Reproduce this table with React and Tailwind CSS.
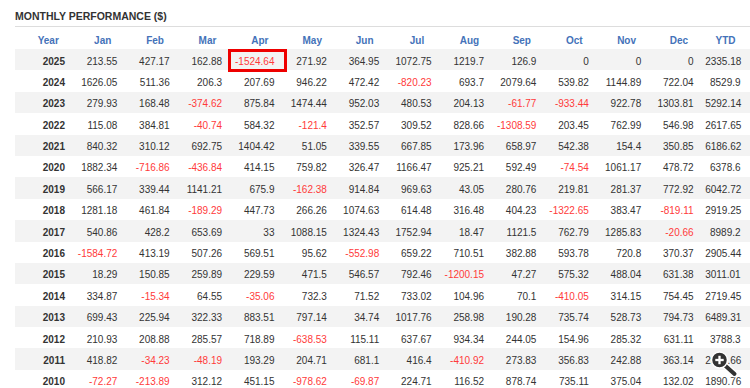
import React from "react";

const rows = [
  ["2025", "213.55", "427.17", "162.88", "-1524.64", "271.92", "364.95", "1072.75", "1219.7", "126.9", "0", "0", "0", "2335.18"],
  ["2024", "1626.05", "511.36", "206.3", "207.69", "946.22", "472.42", "-820.23", "693.7", "2079.64", "539.82", "1144.89", "722.04", "8529.9"],
  ["2023", "279.93", "168.48", "-374.62", "875.84", "1474.44", "952.03", "480.53", "204.13", "-61.77", "-933.44", "922.78", "1303.81", "5292.14"],
  ["2022", "115.08", "384.81", "-40.74", "584.32", "-121.4", "352.57", "309.52", "828.66", "-1308.59", "203.45", "762.99", "546.98", "2617.65"],
  ["2021", "840.32", "310.12", "692.75", "1404.42", "51.05", "339.55", "667.85", "173.96", "658.97", "542.38", "154.4", "350.85", "6186.62"],
  ["2020", "1882.34", "-716.86", "-436.84", "414.15", "759.82", "326.47", "1166.47", "925.21", "592.49", "-74.54", "1061.17", "478.72", "6378.6"],
  ["2019", "566.17", "339.44", "1141.21", "675.9", "-162.38", "914.84", "969.63", "43.05", "280.76", "219.81", "281.37", "772.92", "6042.72"],
  ["2018", "1281.18", "461.84", "-189.29", "447.73", "266.26", "1074.63", "614.48", "316.48", "404.23", "-1322.65", "383.47", "-819.11", "2919.25"],
  ["2017", "540.86", "428.2", "653.69", "33", "1088.15", "1324.43", "1752.94", "18.47", "1121.5", "762.79", "1285.83", "-20.66", "8989.2"],
  ["2016", "-1584.72", "413.19", "507.26", "569.51", "95.62", "-552.98", "659.22", "710.51", "382.88", "593.78", "720.8", "370.37", "2905.44"],
  ["2015", "18.29", "150.85", "259.89", "229.59", "471.5", "546.57", "792.46", "-1200.15", "47.27", "575.32", "488.04", "631.38", "3011.01"],
  ["2014", "334.87", "-15.34", "64.55", "-35.06", "732.3", "71.52", "733.02", "104.96", "70.1", "-410.05", "314.15", "754.45", "2719.45"],
  ["2013", "699.43", "225.94", "322.33", "883.51", "797.14", "34.74", "1017.76", "258.98", "190.28", "735.74", "528.73", "794.73", "6489.31"],
  ["2012", "210.93", "208.88", "285.57", "718.89", "-638.53", "115.11", "637.67", "934.34", "244.05", "154.96", "285.32", "631.11", "3788.3"],
  ["2011", "418.82", "-34.23", "-48.19", "193.29", "204.71", "681.1", "416.4", "-410.92", "273.83", "356.83", "242.88", "363.14", "2657.66"],
  ["2010", "-72.27", "-213.89", "312.12", "451.15", "-978.62", "-69.87", "224.71", "116.52", "878.74", "735.11", "375.04", "132.02", "1890.76"],
];

const months = ["Jan", "Feb", "Mar", "Apr", "May", "Jun", "Jul", "Aug", "Sep", "Oct", "Nov", "Dec"];

const gridCls = "grid grid-cols-[61.5px_repeat(12,52.4px)_44.7px]";

function Cell({ v, ci, ri }) {
  const neg = v.startsWith("-");
  const color = neg ? "text-[#ff3a3a]" : "text-[#333333]";
  if (ci === 0) {
    return <div className="text-right pr-[11.5px] pt-[6.5px] leading-[12px] font-bold text-[#333333]">{v}</div>;
  }
  if (ci === 13) {
    return <div className={"text-right pr-[9.3px] pt-[6.5px] leading-[12px] " + color}>{v}</div>;
  }
  const boxed = ri === 0 && ci === 4;
  return (
    <div className={"relative text-right pr-[11.6px] pt-[6.5px] leading-[12px] " + color}>
      {v}
      {boxed && (
        <span className="absolute z-10 -left-[6px] -right-[1px] top-0 -bottom-[2px] border-[3px] border-[#ee0000]" />
      )}
    </div>
  );
}

export default function App() {
  return (
    <div className="relative w-[750px] h-[388px] overflow-hidden bg-white font-['Liberation_Sans',Arial,sans-serif] text-[10px]">
      <div className="ml-[15px] pt-[10px] pb-[3px] border-b border-[#dddddd]">
        <div className="text-[10.5px] leading-[13px] font-bold text-[#333333]">MONTHLY PERFORMANCE ($)</div>
      </div>
      <div className="ml-[15px]">
        <div className={gridCls + " h-[22px]"}>
          <div className="text-center pl-[5px] pt-[8px] leading-[12px] font-bold text-[#4472b9]">Year</div>
          {months.map((m) => (
            <div key={m} className="text-center pt-[8px] leading-[12px] font-bold text-[#4472b9]">{m}</div>
          ))}
          <div className="text-center pr-[4px] pt-[8px] leading-[12px] font-bold text-[#4472b9]">YTD</div>
        </div>
        {rows.map((r, ri) => (
          <div key={r[0]} className={gridCls + " h-[21.4px] " + (ri % 2 === 0 ? "bg-[#f3f3f3]" : "bg-white")}>
            {r.map((v, ci) => (
              <Cell key={ci} v={v} ci={ci} ri={ri} />
            ))}
          </div>
        ))}
      </div>
      <svg className="absolute left-[709px] top-[349px] z-20" width="30" height="30" viewBox="0 0 30 30">
        <line x1="15.5" y1="16" x2="25.5" y2="25" stroke="#ffffff" strokeWidth="6.5" strokeLinecap="round" />
        <line x1="15.5" y1="16" x2="25.5" y2="25" stroke="#333333" strokeWidth="4" strokeLinecap="round" />
        <circle cx="10.5" cy="11" r="8" fill="#333333" stroke="#ffffff" strokeWidth="1.5" />
        <line x1="6.3" y1="11" x2="14.7" y2="11" stroke="#ffffff" strokeWidth="2.3" />
        <line x1="10.5" y1="6.8" x2="10.5" y2="15.2" stroke="#ffffff" strokeWidth="2.3" />
      </svg>
    </div>
  );
}
